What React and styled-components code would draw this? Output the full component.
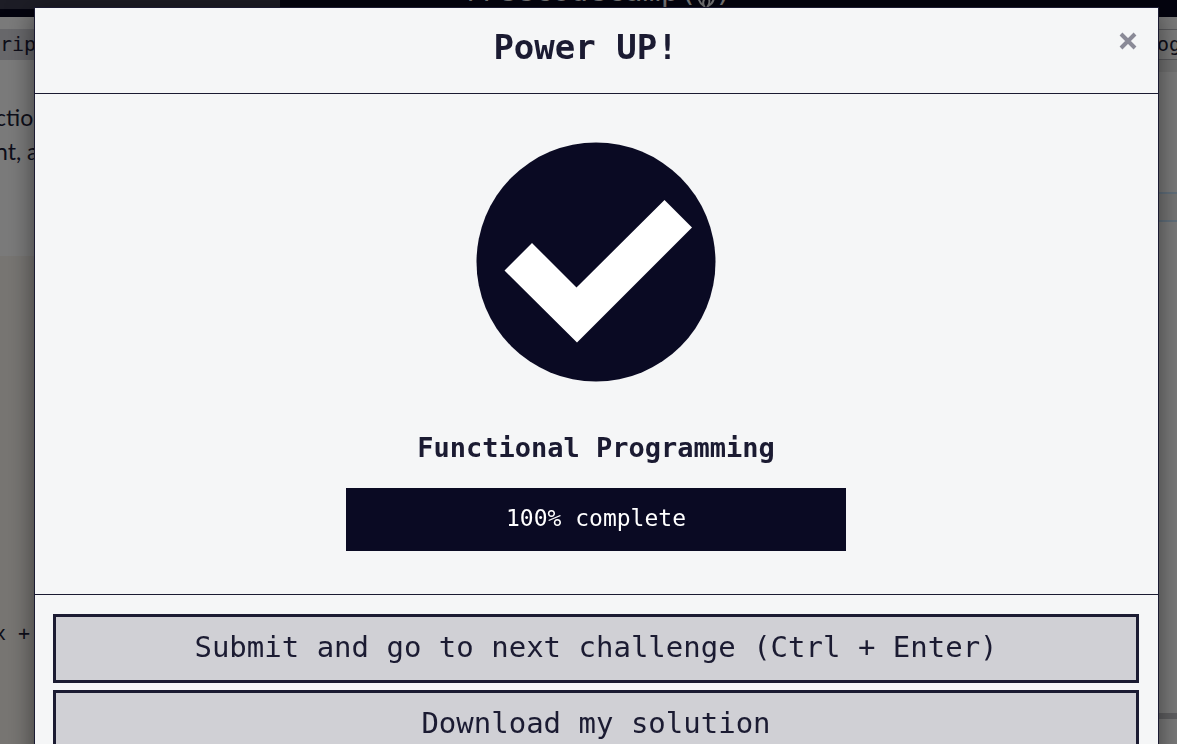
import React from "react";
import styled, { createGlobalStyle } from "styled-components";

const mono = `"DejaVu Sans Mono", "Liberation Mono", monospace`;

const Global = createGlobalStyle`
  *, *::before, *::after { box-sizing: border-box; }
  html, body, #root { height: 100%; }
  body { margin: 0; overflow: hidden; background: #7b7b7b; color: #0e0e19; }
`;

const Page = styled.div`
  height: 100vh;
  display: flex;
  flex-direction: column;
  overflow: hidden;
`;
const Header = styled.header`
  flex: none;
  height: 17px;
  display: grid;
  grid-template-columns: 280px 1fr;
  background: #04040f;
  overflow: hidden;
`;
const SearchBar = styled.div`
  height: 9px;
  background: #1d1d26;
`;
const Brand = styled.div`
  display: flex;
  align-items: flex-end;
  height: 8px;
  padding-left: 182px;
  font: 30px/34px ${mono};
  color: #7b7b7c;
  white-space: pre;
`;
const Flame = styled.svg`
  width: 18px;
  height: 28px;
`;
const Panes = styled.div`
  flex: 1;
  display: flex;
  justify-content: space-between;
  min-height: 0;
`;
const Pane = styled.section`
  width: ${(p) => p.$width}px;
  display: flex;
  flex-direction: column;
  overflow: hidden;
  white-space: pre;
`;
const Tab = styled.div`
  flex: none;
  height: 31px;
  margin-top: 12px;
  font: 20px/${(p) => (p.$active ? 31 : 29)}px ${mono};
  background: ${(p) => (p.$active ? "#68686b" : "transparent")};
  border: solid #5a5a5d;
  border-width: ${(p) => (p.$active ? 0 : "1px 0")};
`;
const Prose = styled.p`
  margin: 40px 0 0 -5px;
  font: 23px/34px Lato, sans-serif;
`;
const Code = styled.div`
  flex: 1;
  margin-top: 88px;
  padding-top: 360px;
  font: 20px/34px ${mono};
  text-indent: -6px;
  background: #787673;
`;
const Strip = styled.div`
  height: 12px;
  background: #727272;
`;
const Result = styled.div`
  height: 30px;
  margin-top: 120px;
  background: #767676;
  border: solid #62707c;
  border-width: 2px 0;
`;
const Divider = styled.div`
  height: 6px;
  margin-top: auto;
  margin-bottom: 25px;
  background: #606062;
`;

const Overlay = styled.div`
  position: fixed;
  inset: 0;
  padding: 7px 18px 0 34px;
  overflow: hidden;
`;
const Dialog = styled.div`
  border: 1px solid #1b1b32;
  background: #f5f6f7;
  color: #1b1b32;
  box-shadow: 0 5px 25px rgba(0, 0, 0, 0.5);
  font-family: ${mono};
`;
const DialogHeader = styled.header`
  display: flex;
  align-items: flex-start;
  height: 86px;
  padding: 16px 18px 0 20px;
  border-bottom: 1px solid #1b1b32;
`;
const Title = styled.h2`
  flex: 1;
  margin: 0;
  font-size: 34px;
  line-height: 46px;
  text-align: center;
`;
const Close = styled.button`
  width: 24px;
  height: 34px;
  padding: 0;
  border: 0;
  background: none;
  color: #8a8a97;
  display: grid;
  place-items: center;
`;
const DialogBody = styled.main`
  display: flex;
  flex-direction: column;
  align-items: center;
  padding: 48px 19px 43px 18px;
  border-bottom: 1px solid #1b1b32;
`;
const Check = styled.svg`
  display: block;
  width: 240px;
  height: 240px;
`;
const Block = styled.h3`
  margin: 48px 0 22px;
  font-size: 27px;
  line-height: 36px;
`;
const Progress = styled.div`
  width: 500px;
  max-width: 100%;
  height: 63px;
  background: #0a0a23;
  color: #fff;
  font-size: 23px;
  line-height: 60px;
  text-align: center;
`;
const DialogFooter = styled.footer`
  display: flex;
  flex-direction: column;
  gap: 7px;
  padding: 19px 19px 18px 18px;
`;
const Action = styled.button`
  height: 69px;
  padding: 0 0 4px;
  border: 3px solid #1b1b32;
  border-radius: 0;
  background: #d0d0d5;
  color: #1b1b32;
  font: 29px/36px ${mono};
`;

export default function App() {
  return (
    <>
      <Global />
      <Page>
        <Header>
          <SearchBar />
          <Brand>
            freeCodeCamp(
            <Flame viewBox="0 0 18 28" fill="none" stroke="currentColor" strokeWidth="2" aria-hidden="true">
              <path d="M7 26C1 22 0 16 4 11C6 8 8 6 8 2C13 6 12 10 13 13C14 12 14 10 14 9C19 17 17 23 11 26C14 21 12 18 9 15C9 19 4 20 7 26Z" />
            </Flame>
            )
          </Brand>
        </Header>
        <Panes>
          <Pane $width={60}>
            <Tab $active>ript</Tab>
            <Prose>
              ction
              <br />
              nt, a
            </Prose>
            <Code>x +</Code>
          </Pane>
          <Pane $width={20}>
            <Tab>og</Tab>
            <Strip />
            <Result />
            <Divider />
          </Pane>
        </Panes>
      </Page>
      <Overlay>
        <Dialog role="dialog" aria-modal="true" aria-labelledby="dialog-title">
          <DialogHeader>
            <Title id="dialog-title">Power UP!</Title>
            <Close type="button" aria-label="Close">
              <svg width="18" height="18" viewBox="0 0 18 18" fill="none" stroke="currentColor" strokeWidth="4">
                <path d="M2 2L16 16M16 2L2 16" />
              </svg>
            </Close>
          </DialogHeader>
          <DialogBody>
            <Check viewBox="0 0 240 240" aria-hidden="true">
              <circle cx="120" cy="120" r="119.5" fill="#0a0a23" />
              <path d="M28.500 128.500L56 101L100.500 145.500L188.500 58L216 85.500L101 200.500Z" fill="#fff" />
            </Check>
            <Block>Functional Programming</Block>
            <Progress>100% complete</Progress>
          </DialogBody>
          <DialogFooter>
            <Action type="button">Submit and go to next challenge (Ctrl + Enter)</Action>
            <Action type="button">Download my solution</Action>
          </DialogFooter>
        </Dialog>
      </Overlay>
    </>
  );
}
